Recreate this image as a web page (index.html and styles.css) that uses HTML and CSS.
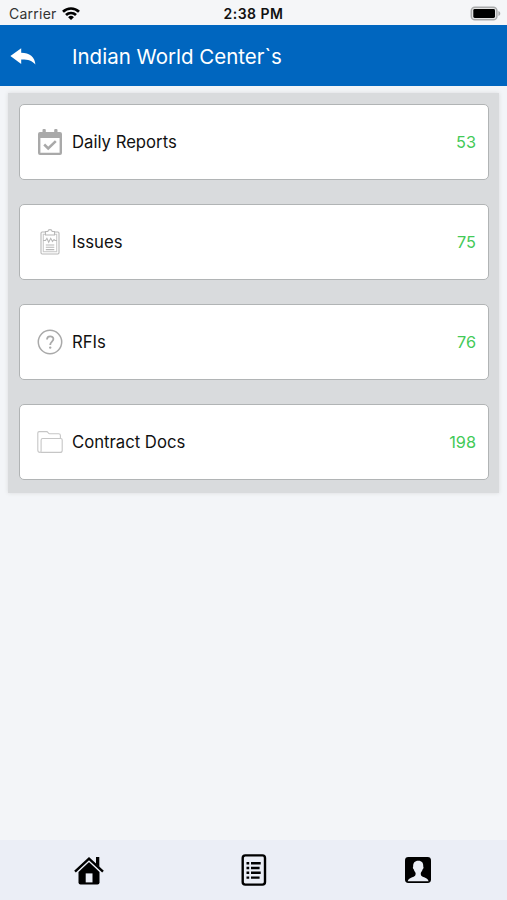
FILE: index.html
```html
<!DOCTYPE html>
<html lang="en">
<head>
<meta charset="utf-8">
<title>Indian World Center`s</title>
<link rel="stylesheet" href="styles.css">
</head>
<body>
<div class="status">
  <div class="carrier"><span>Carrier</span>
    <svg width="18" height="14" viewBox="0 0 18 14" fill="none" stroke="#000" stroke-width="2.7"><path d="M1 4.7a11.6 11.6 0 0 1 16 0M4 8a7.2 7.2 0 0 1 10 0"/><path d="M9 13.1 6.1 10.2a4.1 4.1 0 0 1 5.8 0z" fill="#000" stroke="none"/></svg>
  </div>
  <span class="time">2:38 PM</span>
  <svg class="battery" width="31" height="16" viewBox="0 0 31 16"><rect x="1.3" y="1.2" width="25.6" height="12.6" rx="3.6" fill="#e4e4e4" stroke="#a9aaab" stroke-width="1.5"/><rect x="3.3" y="3.1" width="21.7" height="8.9" rx="1.4"/><path d="M28.4 5c2.5.7 2.5 4.3 0 5z" fill="#a9aaab"/></svg>
</div>
<header class="bar">
  <svg width="26" height="18" viewBox="0 0 26 18" fill="#fff"><path d="M.4 8.1 11.2.3v4.4C19.5 4.7 25 9 25.4 16.6c-3.2-4.1-7.5-5.3-14.2-5.2v4.5z"/></svg>
  <h1>Indian World Center`s</h1>
</header>
<main class="panel">
  <a class="card">
    <svg width="26" height="28" viewBox="0 0 26 28"><path fill="#a9a9a9" fill-rule="evenodd" d="M3 4h2.5V2a1 1 0 0 1 1-1h1.3a1 1 0 0 1 1 1v2h8.4V2a1 1 0 0 1 1-1h1.3a1 1 0 0 1 1 1v2H23a2 2 0 0 1 2 2v19a2 2 0 0 1-2 2H3a2 2 0 0 1-2-2V6a2 2 0 0 1 2-2zm.4 6v14.7h19.2V10z"/><path d="m7.2 16.5 4 4 7.6-7.4" fill="none" stroke="#a9a9a9" stroke-width="2.5"/></svg>
    <span class="name">Daily Reports</span><span class="count">53</span>
  </a>
  <a class="card">
    <svg width="26" height="28" viewBox="0 0 26 28" fill="none" stroke="#b8b8b8" stroke-width="1.1"><rect x="4" y="4" width="18" height="22" rx="1.2"/><rect x="6.3" y="6.3" width="13.4" height="17.4" stroke="#cacaca"/><path fill="#fff" d="M8.5 3.5h2.3c.5-2.5 3.9-2.5 4.4 0h2.3V7h-9z"/><path d="M6 12.5h2.5l1.4-2.2 1.8 4 2-4 1.8 3.2 1.5-2 1 1h2M8.8 17h8.5M8.8 19.3h8.5M8.8 21.6h8.5"/></svg>
    <span class="name">Issues</span><span class="count">75</span>
  </a>
  <a class="card">
    <svg width="26" height="28" viewBox="0 0 26 28" fill="none" stroke="#a9a9a9"><circle cx="13" cy="14" r="11.7" stroke-width="1.5"/><path d="M10 11.6c0-4.4 6.4-4.2 6.4-.5 0 2.5-3.2 2.5-3.2 5.8" stroke-width="1.8"/><circle cx="13.2" cy="19.6" r="1.2" fill="#a9a9a9" stroke="none"/></svg>
    <span class="name">RFIs</span><span class="count">76</span>
  </a>
  <a class="card">
    <svg width="26" height="28" viewBox="0 0 26 28" fill="none" stroke="#c6c6c6" stroke-width="1.1"><path d="M3.2 24.4C1.5 24.4.8 23.5.8 22V5c0-.9.5-1.4 1.4-1.4h7.4c1.6 0 1.5 2.2 3 2.2h9c1.2 0 1.8.6 1.8 1.8v2.8"/><path d="M3.2 24.4c.7 0 .9-.8.9-2V12.2c0-1.1.6-1.7 1.6-1.7h18c1 0 1.5.6 1.5 1.5v10.4c0 1.4-.8 2-2.2 2z"/></svg>
    <span class="name">Contract Docs</span><span class="count">198</span>
  </a>
</main>
<nav class="tabs">
  <svg width="32" height="32" viewBox="0 0 32 32"><path d="M5.5 18 16 8l10.5 10v10.5a2 2 0 0 1-2 2h-17a2 2 0 0 1-2-2z"/><path d="M2 17 16 4.3 30 17" fill="none" stroke="#ebeef6" stroke-width="5"/><path d="M2 17.7 16 4.6l14 13.1" fill="none" stroke="#000" stroke-width="2.4"/><path d="M23 3h3.3v10L23 9.9z"/><path fill="#ebeef6" d="M12.7 19.4h6.8v9h-6.8z"/></svg>
  <svg width="32" height="34" viewBox="0 0 32 34"><rect x="4.7" y="2.4" width="22.3" height="29.2" rx="2.6" fill="none" stroke="#000" stroke-width="2.4"/><path d="M8.5 10.2h2.7M8.5 15h2.7M8.5 19.8h2.7M8.5 24.6h2.7M13 10.2h9.7M13 15h8.6M13 19.8h9.7M13 24.6h8.6" stroke="#000" stroke-width="2.4"/></svg>
  <svg width="32" height="32" viewBox="0 0 32 32"><rect x="3" y="3" width="26" height="26" rx="3.4"/><path fill="#ebeef6" d="M16.3 6.8c3.6 0 5.3 2.3 4.9 5.8.8.5.1 2.6-.7 3-.3 1.8-1.4 2.7-1.7 3.3-.2 3 1.2 3.3 3.4 4.3 2.2 1 3.8 1.4 4.4 4H5.7c.6-2.6 2.3-3 4.5-4 2.3-1 3.6-1.3 3.4-4.3-.4-.6-1.4-1.5-1.7-3.3-.8-.4-1.4-2.5-.7-3-.3-3.5 1.5-5.8 5.1-5.8z"/></svg>
</nav>
</body>
</html>
```
FILE: styles.css
```css
* { box-sizing: border-box; }
body {
  margin: 0;
  height: 900px;
  display: flex;
  flex-direction: column;
  background: #f3f5f8;
  color: #111;
  font-family: Inter, "Liberation Sans", sans-serif;
}
svg { display: block; flex: none; }
.status {
  height: 25.4px;
  display: grid;
  grid-template-columns: 1fr auto 1fr;
  align-items: center;
  padding: 2px 6px 0 9px;
  background: #f5f6f8;
  font-size: 14px;
  line-height: 20px;
}
.carrier { display: flex; align-items: center; gap: 5px; color: #333; letter-spacing: .25px; }
.time { margin-right: 3px; font-weight: 600; color: #111; letter-spacing: .5px; }
.battery { justify-self: end; }
.bar {
  height: 61px;
  display: flex;
  align-items: center;
  gap: 36px;
  padding: 2.4px 0 0 10px;
  background: #0066bf;
  color: #fff;
}
.bar h1 { margin: 0; font-size: 20.5px; font-weight: 400; line-height: 24px; }
.panel {
  display: flex;
  flex-direction: column;
  gap: 24.2px;
  margin: 7px 8px 0;
  padding: 10.2px 10px 13px 11px;
  background: #d9dbdd;
  box-shadow: 0 0 4px #d9dbdd;
}
.card {
  height: 76px;
  display: flex;
  align-items: center;
  padding: 0 12px 0 17px;
  border: 1px solid #b1b4b5;
  border-radius: 5px;
  background: #fff;
}
.name { margin-left: 9px; font-size: 16.7px; line-height: 22px; }
.count { margin-left: auto; font-size: 16.3px; color: #43ca58; }
.tabs {
  height: 60px;
  margin-top: auto;
  display: flex;
  align-items: center;
  justify-content: space-between;
  padding: 0 73px;
  background: #ebeef6;
}
```
